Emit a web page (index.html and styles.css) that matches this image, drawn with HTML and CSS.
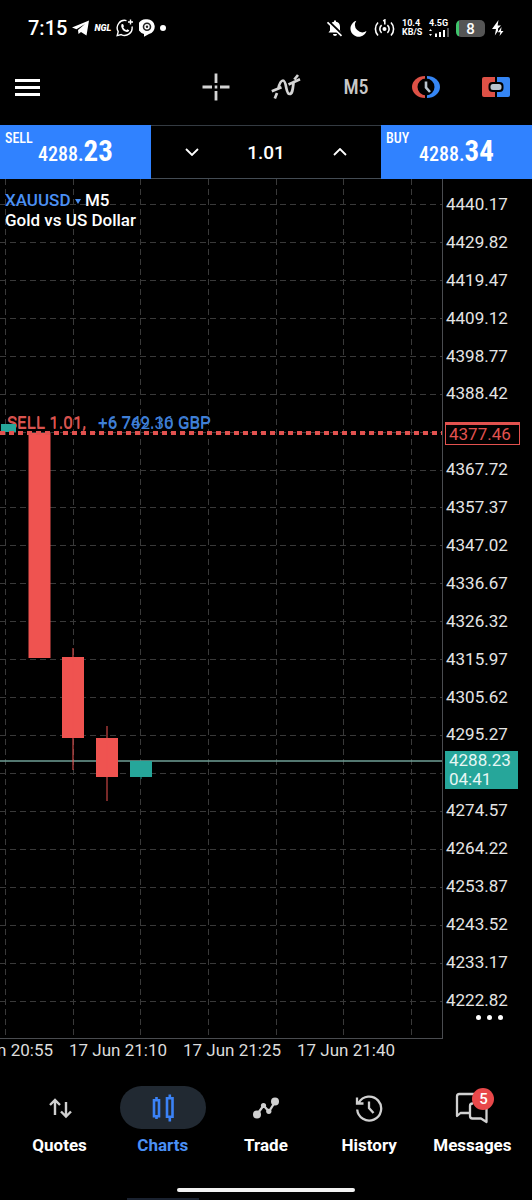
FILE: index.html
```html
<!DOCTYPE html>
<html lang="en">
<head>
    <meta charset="UTF-8">
    <meta name="viewport" content="width=device-width, initial-scale=1.0">
    <title>XAUUSD M5</title>
    <link rel="stylesheet" href="styles.css">
</head>
<body>
    <!-- Phone status bar -->
    <div class="status-bar">
        <div class="status-left">
            <span class="clock">7:15</span>
            <svg width="17" height="16" viewBox="0 0 17 16" fill="#fff"><path d="M0 7.5 17 0.5 14.5 15.5 9 12 6.5 14 6 10 13 4 4.5 9.3Z"/></svg>
            <span class="ngl">NGL</span>
            <svg width="18" height="18" viewBox="0 0 18 18" fill="none" stroke="#fff" stroke-width="1.4"><path d="M10.5 1.6A7.5 7.5 0 0 0 2.2 12.6L1.2 16.6 5.2 15.6A7.5 7.5 0 0 0 16 7.5M14.5 0.5v5M12 3h5"/><path d="M5.5 5.2 7 5 8 7.3 7.2 8.3Q8.2 10.4 10.3 11.2L11.2 10.2 13.3 11.3Q12.8 13.3 10.8 13.1 6 12 5.2 7.2Z" fill="#fff" stroke="none"/></svg>
            <svg width="16" height="18" viewBox="0 0 16 18"><path d="M8 0.3a7.4 7.4 0 0 1 2 14.6L5 17.8 5 15A7.4 7.4 0 0 1 8 0.3Z" fill="#fff"/><circle cx="8" cy="7.7" r="3.5" fill="none" stroke="#222" stroke-width="1.6"/><circle cx="8" cy="7.7" r="1.2" fill="#222"/></svg>
            <span class="dot"></span>
        </div>
        <div class="status-right">
            <svg width="16" height="18" viewBox="0 0 16 18"><path d="M1.5 13.5 3 11.500V7.500A5 5 0 0 1 7 2.800V1.500h2V2.800a5 5 0 0 1 4 4.700v4L14.500 13.500ZM6 15h4a2 2 0 0 1-4 0Z" fill="#fff"/><path d="M1.5 2.3 15.500 15.800" stroke="#000" stroke-width="2.500"/><path d="M.5 3.3 14.500 16.800" stroke="#fff" stroke-width="1.7"/></svg>
            <svg width="17" height="17" viewBox="0 0 17 17" fill="#fff"><path d="M6.3.7A8.2 8.2 0 1 0 16.5 11 7.4 7.4 0 0 1 6.3.7Z"/></svg>
            <svg width="21" height="18" viewBox="0 0 21 18" fill="none" stroke="#fff" stroke-width="1.6"><circle cx="10.5" cy="10" r="2" fill="#fff" stroke="none"/><path d="M7.6 6.2a5 5 0 0 0 0 7.6M13.4 6.2a5 5 0 0 1 0 7.6M4 3.5a9.5 9.5 0 0 0 0 13M17 3.5a9.5 9.5 0 0 1 0 13M9.2 2 10.8 1v4.5"/></svg>
            <div class="tiny speed">10.4<br>KB/S</div>
            <div class="tiny network">4.5G
                <svg width="21" height="9" viewBox="0 0 21 9" fill="#fff"><path d="M0 3 1.5 1 3 3ZM0 6 1.5 8 3 6ZM6 5.5h2V9H6ZM10 4h2v5h-2ZM14 2h2v7h-2Z"/><path d="M18 0h2v9h-2Z" fill="#555"/></svg>
            </div>
            <div class="battery">8</div>
            <svg width="12" height="18" viewBox="0 0 12 18" fill="#fff"><path d="M6.5 1 0 10h4L2.8 16.5 6 12 6 9.5 9 6.5H5.6ZM9.5 8 5.8 13.2h2.6L7.5 17 11.5 12H9Z"/></svg>
        </div>
    </div>

    <!-- Chart toolbar -->
    <header class="toolbar">
        <button class="menu-button" aria-label="Menu"><span></span><span></span><span></span></button>
        <div class="tools">
            <button aria-label="Crosshair">
                <svg width="28" height="28" viewBox="0 0 28 28" stroke="#d4d4d4" stroke-width="2.8"><path d="M14 .5v9.5M14 18v9.5M.5 14H10M18 14h9.5M12.7 14h2.600"/></svg>
            </button>
            <button aria-label="Indicators">
                <svg width="30" height="26" viewBox="0 0 30 26" fill="none" stroke="#d4d4d4" stroke-width="2.7"><path d="M.8 17.300 10.500 13.300M17.500 10.500 29 5.300M3.800 24.500 6 19M7 15.500C8 11 9.500 6.500 12 6.500 14 6.500 14.500 10 15.300 14 16 17.500 16.800 20 18.600 20 21.500 20 21.800 15 22.500 9M23.300 5.500 27 1"/></svg>
            </button>
            <button class="timeframe">M5</button>
            <button aria-label="Trading hours">
                <svg width="28" height="24" viewBox="0 0 28 24"><path d="M13 1A13 11 0 0 0 13 23Z" fill="#de5146"/><path d="M15 1A13 11 0 0 1 15 23Z" fill="#3586f5"/><circle cx="14" cy="12" r="8.500" fill="#000"/><path d="M14 6.500v6L18 17" fill="none" stroke="#b9c4ce" stroke-width="2.6"/></svg>
            </button>
            <button aria-label="One click trading">
                <svg width="28" height="20" viewBox="0 0 28 20"><path d="M2 0h11v20H2a2 2 0 0 1-2-2V2a2 2 0 0 1 2-2Z" fill="#de5146"/><path d="M15 0h11a2 2 0 0 1 2 2v16a2 2 0 0 1-2 2H15Z" fill="#3586f5"/><rect x="6.500" y="5" width="15" height="10" rx="4" fill="#000"/><rect x="8.500" y="7" width="11" height="6" rx="2.5" fill="#b9c4ce"/></svg>
            </button>
        </div>
    </header>

    <!-- One click trading panel -->
    <section class="trade-panel">
        <button class="deal">
            <span class="deal-side">SELL</span>
            <span class="deal-price">4288.<b>23</b></span>
        </button>
        <div class="volume">
            <button aria-label="Decrease volume"><svg width="14" height="8" viewBox="0 0 14 8" fill="none" stroke="#fff" stroke-width="1.8"><path d="M1 1l6 6 6-6"/></svg></button>
            <input type="text" value="1.01" aria-label="Volume">
            <button aria-label="Increase volume"><svg width="14" height="8" viewBox="0 0 14 8" fill="none" stroke="#fff" stroke-width="1.8"><path d="M1 7l6-6 6 6"/></svg></button>
        </div>
        <button class="deal">
            <span class="deal-side">BUY</span>
            <span class="deal-price">4288.<b>34</b></span>
        </button>
    </section>

    <main class="chart">
        <div class="plot">
            <svg class="plot-canvas" id="plot">
                <g id="grid" class="grid"></g>
                <line class="price-line" x1="0" y1="582" x2="100%" y2="582"/>
                <g class="bear">
                    <rect x="28.5" y="254" width="22" height="225"/>
                    <rect x="62" y="478" width="22" height="81"/>
                    <rect x="72.5" y="469" width="1" height="122"/>
                    <rect x="96" y="559" width="22" height="39"/>
                    <rect x="106.5" y="547" width="1" height="75"/>
                </g>
                <g class="order">
                    <text x="7" y="249">SELL 1.01,</text>
                    <text x="7" y="250">SELL 1.01,</text>
                    <text class="profit" x="98" y="249">+6 749.16 GBP</text>
                    <text class="profit" x="98" y="250">+6 762.30 GBP</text>
                </g>
                <g class="bull">
                    <rect x="1" y="245" width="15" height="8"/>
                    <rect x="130" y="582" width="22" height="16"/>
                    <rect x="140.5" y="596" width="1" height="4"/>
                </g>
                <line class="order-line" x1="0" y1="254" x2="100%" y2="254"/>
            </svg>
            <div class="symbol">
                <a href="#">XAUUSD <span class="caret"></span></a> M5<br>
                Gold vs US Dollar
            </div>
        </div>
        <div class="axis">
            <ul class="prices">
                <li>4440.17</li>
                <li>4429.82</li>
                <li>4419.47</li>
                <li>4409.12</li>
                <li>4398.77</li>
                <li>4388.42</li>
                <li></li>
                <li>4367.72</li>
                <li>4357.37</li>
                <li>4347.02</li>
                <li>4336.67</li>
                <li>4326.32</li>
                <li>4315.97</li>
                <li>4305.62</li>
                <li>4295.27</li>
                <li></li>
                <li>4274.57</li>
                <li>4264.22</li>
                <li>4253.87</li>
                <li>4243.52</li>
                <li>4233.17</li>
                <li>4222.82</li>
            </ul>
            <div class="tag tag-order">4377.46</div>
            <div class="tag tag-price">4288.23<br>04:41</div>
            <button class="more" aria-label="More"><span></span><span></span><span></span></button>
        </div>
    </main>
    <div class="times">
        <span>17 Jun 20:55</span>
        <span>17 Jun 21:10</span>
        <span>17 Jun 21:25</span>
        <span>17 Jun 21:40</span>
    </div>

    <nav class="bottom-nav">
        <a href="#">
            <span class="nav-icon"><svg width="24" height="22" viewBox="0 0 24 22" fill="none" stroke="#d0d0d0" stroke-width="2.4"><path d="M7 18V3M2 8l5-5 5 5M18 5v14M13 14.500l5 5 5-5"/></svg></span>
            Quotes
        </a>
        <a href="#" class="active">
            <span class="nav-icon"><svg width="24" height="28" viewBox="0 0 24 28" fill="none" stroke="#3b82f6" stroke-width="2.6"><path d="M3 6.300h5v16H3ZM5.500 3v3M5.500 22v3M16 4.300h5.500v18.500H16ZM18.800.5v4M18.800 23v4.500"/></svg></span>
            Charts
        </a>
        <a href="#">
            <span class="nav-icon"><svg width="28" height="24" viewBox="0 0 28 24" fill="none" stroke="#d0d0d0" stroke-width="2.3"><path d="M5 18.500 11.500 9.500 17 15.500 23 6"/><g fill="#d0d0d0" stroke="none"><circle cx="5" cy="18.500" r="4"/><circle cx="11.500" cy="9.500" r="2.600"/><circle cx="16.800" cy="15.300" r="2.600"/><circle cx="23" cy="5.500" r="4"/></g></svg></span>
            Trade
        </a>
        <a href="#">
            <span class="nav-icon"><svg width="28" height="28" viewBox="0 0 28 28" fill="none" stroke="#d0d0d0" stroke-width="2.300"><path d="M3.800 8.500A12 12 0 1 1 2.200 15.500M2 3.500V9.500H8.500M14 7.500v6.500l4.500 5"/></svg></span>
            History
        </a>
        <a href="#">
            <span class="nav-icon">
                <svg width="34" height="32" viewBox="0 0 34 32" fill="none" stroke="#d0d0d0" stroke-width="2.300" stroke-linejoin="round"><path d="M20 2H4.500A2.500 2.500 0 0 0 2 4.500V24L5.500 21H15M18 11.500h-.5A2.500 2.500 0 0 0 15 14v10a2.500 2.500 0 0 0 2.500 2.500H26l5.500 3.500V14"/></svg>
                <span class="badge">5</span>
            </span>
            Messages
        </a>
    </nav>
    <div class="home-bar"><span></span></div>
    <div class="edge"></div>

    <script>
        const grid = document.getElementById("grid");
        const height = 860;
        const stepX = 67.65;
        const stepY = 37.93;

        function addLine(x1, y1, x2, y2) {
            const line = document.createElementNS("http://www.w3.org/2000/svg", "line");
            line.setAttribute("x1", x1);
            line.setAttribute("y1", y1);
            line.setAttribute("x2", x2);
            line.setAttribute("y2", y2);
            grid.appendChild(line);
        }

        function drawGrid() {
            grid.innerHTML = "";
            const width = document.getElementById("plot").clientWidth;
            for (let x = 5; x < width; x += stepX) {
                addLine(Math.round(x) + 0.5, 0, Math.round(x) + 0.5, height);
            }
            for (let y = 25; y < height; y += stepY) {
                addLine(0, Math.round(y) + 0.5, width, Math.round(y) + 0.5);
            }
        }

        drawGrid();
        window.addEventListener("resize", drawGrid);
    </script>
</body>
</html>
```

FILE: styles.css
```css
* {
    box-sizing: border-box;
}
body {
    margin: 0;
    background-color: #000;
    color: #fff;
    font-family: Roboto, "Liberation Sans", sans-serif;
    overflow-x: hidden;
}
button {
    padding: 0;
    border: none;
    background: none;
    color: inherit;
    font-family: inherit;
    cursor: pointer;
}
a {
    color: inherit;
    text-decoration: none;
}
svg {
    display: block;
}

/* Status bar */
.status-bar {
    display: flex;
    justify-content: space-between;
    height: 56px;
    padding: 0 28px;
}
.status-left, .status-right {
    display: flex;
    align-items: center;
    gap: 5px;
}
.status-right {
    gap: 7px;
}
.clock {
    font-size: 20px;
    font-weight: 500;
}
.ngl {
    font-size: 9px;
    font-weight: 900;
    font-style: italic;
}
.dot {
    width: 6px;
    height: 6px;
    border-radius: 50%;
    background-color: #fff;
}
.tiny {
    width: 20px;
    font-size: 9px;
    font-weight: 700;
    line-height: 9px;
    white-space: nowrap;
}
.battery {
    width: 29px;
    height: 17px;
    border-radius: 5px;
    background: linear-gradient(90deg, #3fc46c 3px, #555 3px);
    font-size: 15px;
    font-weight: 500;
    line-height: 18px;
    text-align: center;
}

/* Toolbar */
.toolbar {
    display: flex;
    justify-content: space-between;
    height: 62px;
    margin-bottom: 7px;
    padding: 0 1px 0 15px;
}
.menu-button {
    display: flex;
    flex-direction: column;
    justify-content: center;
    gap: 4px;
    width: 25px;
}
.menu-button span {
    height: 3px;
    background-color: #fff;
}
.tools {
    display: flex;
}
.tools button {
    display: flex;
    align-items: center;
    justify-content: center;
    width: 70px;
}
.tools .timeframe {
    color: #c8c8c8;
    font-family: "Roboto Condensed", Roboto, sans-serif;
    font-size: 20px;
    font-weight: 500;
}

/* Sell / volume / buy */
.trade-panel {
    display: grid;
    grid-template-columns: 151fr 230fr 151fr;
    height: 54px;
}
.deal {
    display: flex;
    align-items: flex-start;
    gap: 7px;
    padding: 5px;
    background-color: #3082ff;
    font-family: "Roboto Condensed", "Liberation Sans Narrow", Roboto, sans-serif;
    text-align: left;
}
.deal-side {
    width: 26px;
    font-size: 14px;
    font-weight: 500;
    line-height: 16px;
}
.deal-price {
    padding-top: 5px;
    font-size: 20px;
    font-weight: 500;
    line-height: 32px;
}
.deal-price b {
    font-size: 29px;
    font-weight: 700;
}
.volume {
    display: flex;
    align-items: center;
    justify-content: space-between;
    border-top: 1px solid #343b42;
    border-bottom: 1px solid #444c54;
}
.volume button {
    display: flex;
    align-items: center;
    justify-content: center;
    width: 82px;
    height: 100%;
}
.volume input {
    width: 60px;
    padding: 0;
    border: none;
    background: none;
    color: #fff;
    font-family: inherit;
    font-size: 19px;
    font-weight: 500;
    text-align: center;
}

/* Chart */
.chart {
    display: flex;
    height: 860px;
}
.plot {
    position: relative;
    flex: 1;
    border-right: 1px solid #4a4c50;
    border-bottom: 1px solid #4a4c50;
}
.plot-canvas {
    width: 100%;
    height: 100%;
}
.grid line {
    stroke: #393939;
    stroke-dasharray: 6 4;
}
.bear {
    fill: #ef5350;
}
.bull {
    fill: #26a69a;
}
.price-line {
    stroke: #6f9f96;
    stroke-width: 1.5px;
}
.order-line {
    stroke: #e2524f;
    stroke-width: 4px;
    stroke-dasharray: 5 4;
}
.order text {
    fill: #d9534f;
    font-size: 17px;
}
.order .profit {
    fill: #3f7fd6;
}
.symbol {
    position: absolute;
    top: 11px;
    left: 5px;
    font-size: 17px;
    font-weight: 500;
    line-height: 20px;
}
.symbol a {
    color: #4a90f5;
}
.caret {
    display: inline-block;
    border: 3px solid transparent;
    border-top: 5px solid #4a90f5;
    border-bottom: none;
    vertical-align: middle;
}
.axis {
    position: relative;
    width: 89px;
}
.prices {
    display: flex;
    flex-direction: column;
    justify-content: space-between;
    height: 816px;
    margin: 15px 0 0;
    padding: 0 0 0 3px;
    color: #e4e4e4;
    font-size: 17px;
    line-height: 20px;
    list-style: none;
}
.prices li {
    height: 20px;
}
.tag {
    position: absolute;
    left: 2px;
    padding: 0 4px;
    font-size: 17px;
    line-height: 19px;
}
.tag-order {
    top: 243px;
    width: 75px;
    padding: 0 3px;
    border: 1px solid #e2524f;
    border-top-width: 3px;
    background-color: #000;
    color: #e2524f;
}
.tag-price {
    top: 572px;
    width: 73px;
    background-color: #26a69a;
    color: #e8f6f4;
}
.more {
    position: absolute;
    right: 29px;
    bottom: 19px;
    display: flex;
    gap: 6px;
}
.more span {
    width: 5px;
    height: 5px;
    border-radius: 50%;
    background-color: #fff;
}
.times {
    display: flex;
    height: 24px;
    margin-left: -53px;
    color: #dcdcdc;
    font-size: 17px;
    line-height: 22px;
}
.times span {
    flex: none;
    width: 114px;
    text-align: center;
}

/* Bottom navigation */
.bottom-nav {
    display: flex;
    padding: 23px 8px 0;
}
.bottom-nav a {
    flex: 1;
    display: flex;
    flex-direction: column;
    align-items: center;
    gap: 6px;
    font-size: 17px;
    font-weight: 700;
    line-height: 20px;
}
.nav-icon {
    position: relative;
    display: flex;
    align-items: center;
    justify-content: center;
    width: 86px;
    height: 43px;
    border-radius: 22px;
}
.bottom-nav .active {
    color: #4a90f5;
}
.active .nav-icon {
    background-color: #212932;
}
.badge {
    position: absolute;
    top: 2px;
    right: 21px;
    width: 22px;
    height: 22px;
    border-radius: 50%;
    background-color: #e8484a;
    color: #fff;
    font-size: 15px;
    font-weight: 500;
    line-height: 22px;
    text-align: center;
}
.home-bar {
    display: flex;
    justify-content: center;
    padding-top: 33px;
}
.home-bar span {
    width: 178px;
    height: 4px;
    border-radius: 2px;
    background-color: #f2f2f2;
}
.edge {
    width: 72px;
    height: 2px;
    margin: 6px 0 0 127px;
    background-color: #1a2230;
}
```
